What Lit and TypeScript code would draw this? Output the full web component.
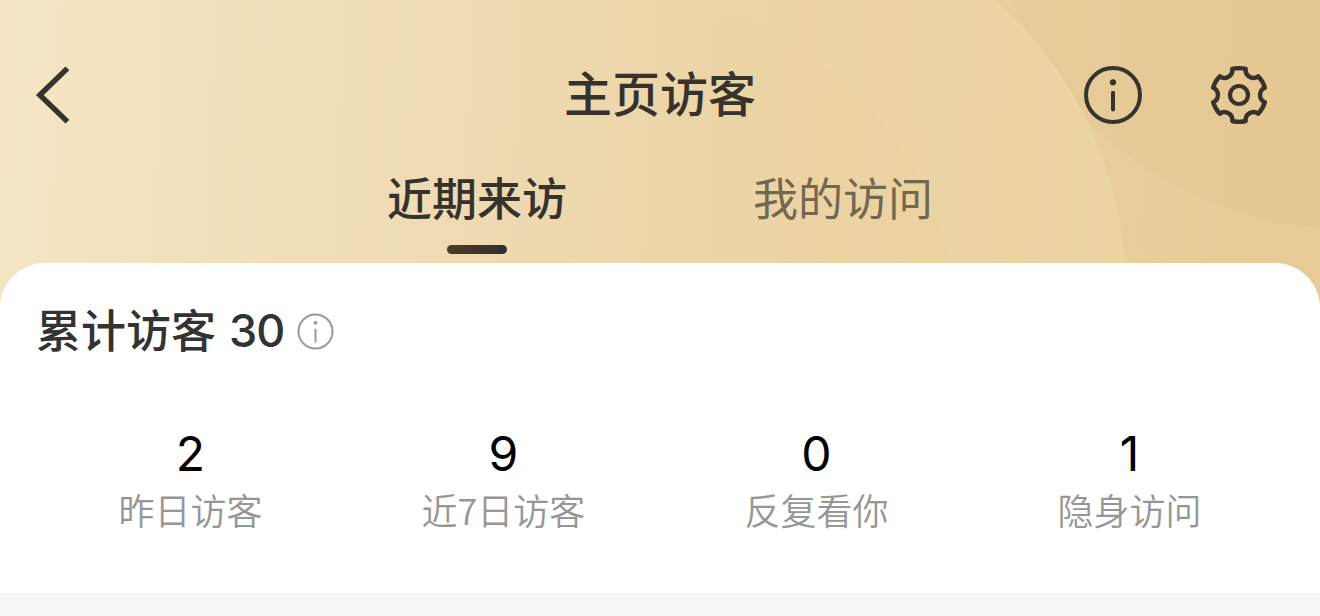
import { LitElement, html, css, svg } from "lit";
import { customElement, property, state } from "lit/decorators.js";
import { classMap } from "lit/directives/class-map.js";

const TOOTH = "A26.8 26.8 0 0 1";
const NOTCH = "A7.8 7.8 0 0 0";
const gearPath = (() => {
  const at = (x: number, y: number, deg: number) => {
    const a = (deg * Math.PI) / 180;
    return `${(x * Math.cos(a) - y * Math.sin(a)).toFixed(2)} ${(x * Math.sin(a) + y * Math.cos(a)).toFixed(2)}`;
  };
  let d = `M${at(-6.7, -26, 0)}`;
  for (let i = 0; i < 6; i++) {
    d += `${TOOTH} ${at(6.7, -26, i * 60)}${NOTCH} ${at(-6.7, -26, (i + 1) * 60)}`;
  }
  return d + "Z";
})();

@customElement("visitor-icon")
class VisitorIcon extends LitElement {
  @property() name = "info";
  static styles = css`
    :host { display: block; }
    svg { display: block; width: 100%; height: 100%; fill: none; stroke: currentColor; overflow: visible; }
    .dot { fill: currentColor; stroke: none; }
  `;
  render() {
    const shapes: Record<string, unknown> = {
      back: svg`<path d="M8.4 -26.6L-19.2 0L8.4 26.6" stroke-width="5.4"/>`,
      info: svg`<circle r="27" stroke-width="4"/><circle class="dot" cy="-12.7" r="3.1"/><path d="M0 -2.2V14.6" stroke-width="4" stroke-linecap="round"/>`,
      hint: svg`<circle r="27.6" stroke-width="3.2"/><circle class="dot" cy="-14" r="3.2"/><path d="M0 -3V16.5" stroke-width="3.2" stroke-linecap="round"/>`,
      gear: svg`<path d=${gearPath} stroke-width="4.4" stroke-linejoin="round"/><circle r="9" stroke-width="4.2"/>`,
    };
    return html`<svg viewBox="-30 -30 60 60" aria-hidden="true">${shapes[this.name]}</svg>`;
  }
}

@customElement("app-root")
class AppRoot extends LitElement {
  @state() private active = 0;
  private tabs = ["近期来访", "我的访问"];
  private stats = [
    ["2", "昨日访客"],
    ["9", "近7日访客"],
    ["0", "反复看你"],
    ["1", "隐身访问"],
  ];

  static styles = css`
    :host {
      display: block;
      height: 616px;
      overflow: hidden;
      background: #f7f7f7;
      font-family: "Noto Sans CJK SC", sans-serif;
      color: #333;
    }
    .page { display: grid; height: 616px; grid-template-rows: 263px 330px 23px; position: relative; }
    .backdrop { position: absolute; top: 0; left: 0; width: 1320px; height: 320px; }
    .header, .card { position: relative; }
    .header { color: #37322b; }
    .bar { display: grid; grid-template-columns: 1fr auto 1fr; align-items: center; height: 190px; box-sizing: border-box; padding: 0 51px 0 29px; }
    .title { font-size: 48px; line-height: 72px; font-weight: 500; margin: 0; padding: 0 0 9px 22px; }
    .actions { display: flex; justify-content: flex-end; gap: 66px; }
    .icon { width: 60px; height: 60px; }
    .tabs { display: grid; grid-template-columns: 366px 366px; justify-content: center; margin-top: -26px; }
    .tab { display: flex; flex-direction: column; align-items: center; border: 0; padding: 0; background: none; font: inherit; font-size: 45px; line-height: 66px; color: #73674f; }
    .tab.on { font-weight: 500; color: #37322b; }
    .mark { width: 60px; height: 9px; border-radius: 5px; margin-top: 15px; background: linear-gradient(90deg, #4d3b25, #302f30); }
    .card { background: #fff; border-radius: 45px 45px 0 0; box-sizing: border-box; padding: 35px 34px 0 34px; }
    .total { display: flex; align-items: center; height: 66px; margin: 0; padding-left: 2px; font-size: 45px; line-height: 66px; font-weight: 500; }
    .caption { padding-bottom: 5px; }
    .count { font-family: Inter, sans-serif; font-size: 45px; margin-left: 13px; padding-bottom: 1px; letter-spacing: -1px; }
    .hint { width: 37px; height: 37px; margin-left: 12.5px; color: #999; }
    .stats { display: grid; grid-template-columns: repeat(4, 313px); margin: 58px 0 0; }
    .stat { display: flex; flex-direction: column-reverse; align-items: center; }
    .label { font-size: 36px; line-height: 54px; margin-top: -4px; font-weight: 350; color: #969696; }
    .value { margin: 0; font-family: Inter, sans-serif; font-size: 48px; line-height: 64px; color: #000; }
  `;

  render() {
    return html`
      <div class="page">
        <svg class="backdrop" viewBox="0 0 1320 320" aria-hidden="true">
          <defs>
            <linearGradient id="base" gradientUnits="userSpaceOnUse" x1="0" y1="0" x2="1320" y2="60">
              <stop offset="0" stop-color="#f4e5c4"/>
              <stop offset="0.28" stop-color="#f0dcb6"/>
              <stop offset="0.6" stop-color="#ebd3a4"/>
              <stop offset="1" stop-color="#e7ca95"/>
            </linearGradient>
            <linearGradient id="glow" gradientUnits="userSpaceOnUse" x1="560" y1="0" x2="1126" y2="0">
              <stop offset="0" stop-color="#f2e0b4" stop-opacity="0"/>
              <stop offset="1" stop-color="#f2e0b4" stop-opacity="0.3"/>
            </linearGradient>
            <linearGradient id="shade" gradientUnits="userSpaceOnUse" x1="620" y1="200" x2="960" y2="200">
              <stop offset="0" stop-color="#e3c58c" stop-opacity="0"/>
              <stop offset="1" stop-color="#e3c58c" stop-opacity="0.15"/>
            </linearGradient>
          </defs>
          <rect width="1320" height="320" fill="url(#base)"/>
          <circle cx="1342" cy="-124" r="352" fill="#dcba7d" fill-opacity="0.13"/>
          <circle cx="740" cy="290" r="386" fill="url(#base)"/>
          <circle cx="740" cy="290" r="386" fill="url(#glow)"/>
          <circle cx="616" cy="334" r="340" fill="url(#shade)"/>
        </svg>
        <header class="header">
          <div class="bar">
            <visitor-icon class="icon" name="back"></visitor-icon>
            <h1 class="title">主页访客</h1>
            <div class="actions">
              <visitor-icon class="icon" name="info"></visitor-icon>
              <visitor-icon class="icon" name="gear"></visitor-icon>
            </div>
          </div>
          <nav class="tabs">
            ${this.tabs.map(
              (t, i) => html`<button class=${classMap({ tab: true, on: i === this.active })} @click=${() => (this.active = i)}>
                <span>${t}</span>${i === this.active ? html`<span class="mark"></span>` : ""}
              </button>`
            )}
          </nav>
        </header>
        <main class="card">
          <h2 class="total">
            <span class="caption">累计访客</span><span class="count">30</span>
            <visitor-icon class="hint" name="hint"></visitor-icon>
          </h2>
          <dl class="stats">
            ${this.stats.map(([v, l]) => html`<div class="stat"><dt class="label">${l}</dt><dd class="value">${v}</dd></div>`)}
          </dl>
        </main>
      </div>
    `;
  }
}
